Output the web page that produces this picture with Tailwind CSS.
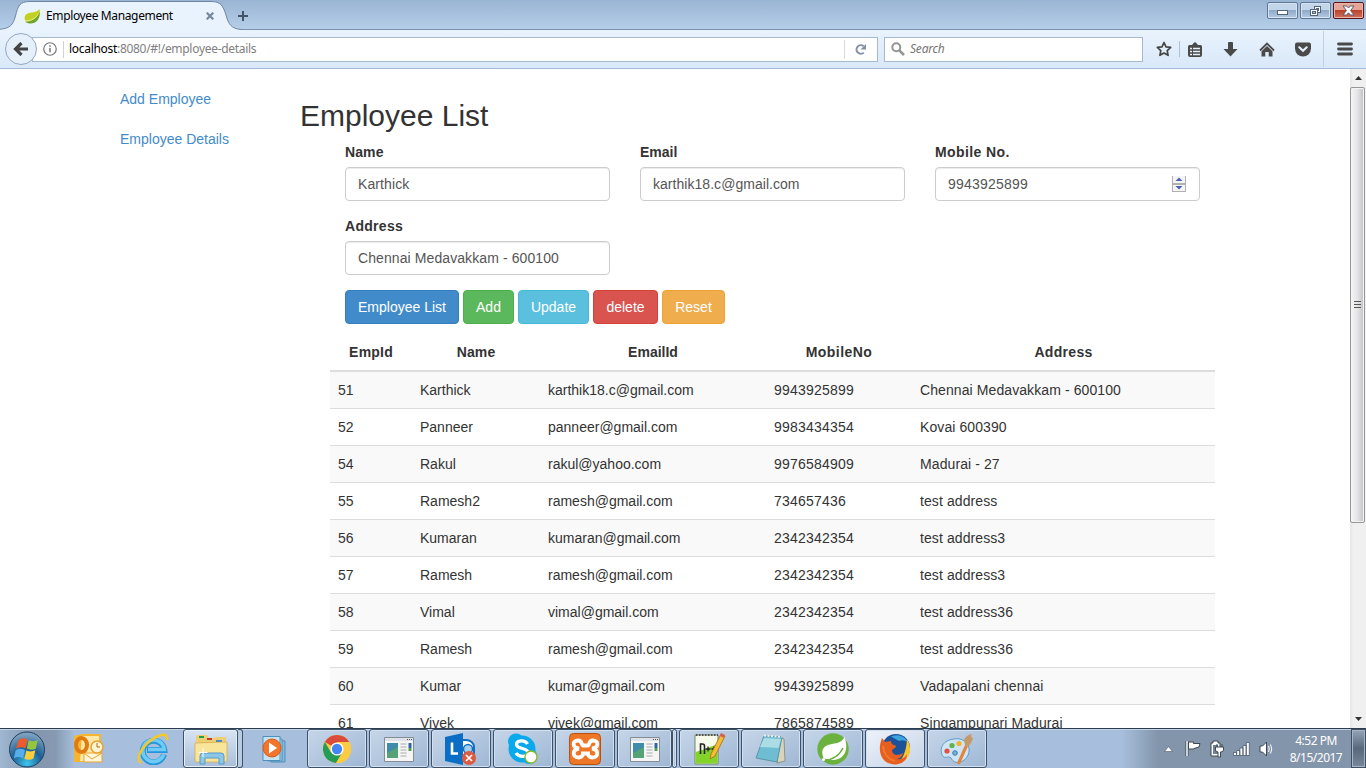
<!DOCTYPE html>
<html lang="en">
<head>
<meta charset="utf-8">
<title>Employee Management</title>
<script src="https://cdn.jsdelivr.net/npm/@tailwindcss/browser@4"></script>
</head>
<body class="w-[1366px] h-[768px] overflow-hidden bg-white font-['Liberation_Sans',Arial,sans-serif] text-sm leading-5 text-[#333]">
<div class="flex flex-col h-[768px] w-[1366px]">

  <!-- Title bar -->
  <header class="relative h-[30px] shrink-0 flex bg-gradient-to-b from-[#9ab4d3] to-[#b5cee9] border-b border-[#7b92ad] font-['Noto_Sans',sans-serif]">
    <svg class="absolute left-0 top-0" width="250" height="30" viewBox="0 0 250 30">
      <path d="M0 30V29C10 28.500 13 25 15.500 16C18 6 19.500 1.500 30 1.500H211C221 1.500 223 6 226 15C228.500 24 231 28.500 241 29.500V30Z" fill="#e9f3fd"/>
      <path d="M0 29.200C10 28.500 13 25 15.500 16C18 6 19.500 1.500 30 1.500H211C221 1.500 223 6 226 15C228.500 24 231 28.500 241 29.500" fill="none" stroke="#6f86a3"/>
    </svg>
    <div class="relative flex items-center w-[232px] pl-6 pt-[3px] text-black text-xs tracking-[-0.37px]">
      <svg width="16" height="16" viewBox="0 0 16 16" class="shrink-0"><path d="M15.500 1c1 6-.5 13-9 13-2 0-4-.6-5.500-1.600C-.5 7 3 5 8 4.500 12 4 14 3 15.500 1z" fill="#c3d021"/><path d="M15.600 4c.7 6-2.600 11.600-9 11.600-2 0-4-.6-5.600-2C9 13.800 13 10 15.600 4z" fill="#6fa52a"/><path d="M1 12.700c6 .6 11-2.500 13.500-7" stroke="#eef3a0" stroke-width=".8" fill="none"/></svg>
      <span class="ml-[6px] whitespace-nowrap w-[160px]">Employee Management</span>
      <svg width="8" height="8" viewBox="0 0 8 8"><path d="M.7.7l6.600 6.600M7.300.7L.7 7.300" stroke="#77889b" stroke-width="2.200"/></svg>
    </div>
    <svg class="relative mt-[10px] ml-[5px]" width="12" height="12" viewBox="0 0 12 12"><path d="M6 1v10M1 6h10" stroke="#43546a" stroke-width="2"/></svg>
    <div class="ml-auto mr-[2px] mt-[2px] flex gap-[2px] h-[17px]">
      <div class="w-[31px] rounded-[2px] border border-[#5f7695] bg-gradient-to-b from-[#c3d5e9] from-45% via-[#91aac6] via-50% to-[#b4cbe4] shadow-[inset_0_0_0_1px_#d5e3f3] flex justify-center items-end pb-[3px]"><div class="w-[11px] h-[5px] border border-[#53657c] bg-white"></div></div>
      <div class="w-[31px] rounded-[2px] border border-[#5f7695] bg-gradient-to-b from-[#c3d5e9] from-45% via-[#91aac6] via-50% to-[#b4cbe4] shadow-[inset_0_0_0_1px_#d5e3f3] flex justify-center items-center"><svg width="13" height="12" viewBox="0 0 13 12" shape-rendering="crispEdges"><rect x="5.500" y="1.500" width="6" height="6" fill="#fff" stroke="#53657c"/><rect x="7.500" y="3.500" width="2" height="2" fill="#a9bdd5" stroke="#53657c"/><rect x="1.500" y="4.500" width="7" height="6" fill="#fff" stroke="#53657c"/><rect x="3.500" y="6.500" width="3" height="2" fill="#a9bdd5" stroke="#53657c"/></svg></div>
      <div class="w-[31px] rounded-[2px] border border-[#5c1219] bg-gradient-to-b from-[#e4a597] from-45% via-[#bd4229] via-50% to-[#cf705c] shadow-[inset_0_0_0_1px_#e9b5a8] flex justify-center items-center"><svg width="13" height="11" viewBox="0 0 13 11"><path d="M1 1h3.600l1.900 2 1.900-2H12L8.600 5.500 12 10H8.400L6.500 7.800 4.600 10H1l3.400-4.500z" fill="#fff" stroke="#5b5d70"/></svg></div>
    </div>
  </header>

  <!-- Navigation toolbar -->
  <nav class="h-[39px] shrink-0 flex items-center bg-gradient-to-b from-[#e9f3fd] to-[#d9e8f8] border-b border-[#a2bbd7] text-xs font-['Noto_Sans',sans-serif]">
    <div class="relative z-10 ml-[5px] size-8 rounded-full border border-[#94a8c0] bg-[#e6f0fb] flex items-center justify-center shrink-0">
      <svg width="16" height="14" viewBox="0 0 16 14"><path d="M8.500 1L2.500 7l6 6M2.500 7H15" fill="none" stroke="#444" stroke-width="3.200"/></svg>
    </div>
    <div class="-ml-[5px] w-[846px] h-[25px] bg-white border border-[#a5b9cf] flex items-center pl-[10px] shrink-0">
      <svg width="14" height="14" viewBox="0 0 15 15"><circle cx="7.500" cy="7.500" r="6.700" fill="none" stroke="#777" stroke-width="1.300"/><path d="M7.500 6.300v4.700M7.500 3.500v1.600" stroke="#777" stroke-width="1.600"/></svg>
      <div class="ml-[6px] w-px h-[17px] bg-[#d3d3d3]"></div>
      <div class="ml-[5px] text-[#808080] whitespace-nowrap flex-1 tracking-[-0.3px]"><span class="text-black">localhost</span>:8080/#!/employee-details</div>
      <div class="w-px h-[19px] bg-[#d5dbe3]"></div>
      <svg class="ml-[9px] mr-[10px]" width="13" height="13" viewBox="0 0 13 13"><path d="M9.800 9.600A4.300 4.300 0 1 1 9.600 3.200" fill="none" stroke="#8292a6" stroke-width="2"/><path d="M12 1v5.500H6.500z" fill="#8292a6"/></svg>
    </div>
    <div class="ml-[6px] w-[259px] h-[25px] bg-white border border-[#a5b9cf] flex items-center pl-[6px] shrink-0">
      <svg width="14" height="14" viewBox="0 0 14 14"><circle cx="5.300" cy="5.300" r="4" fill="none" stroke="#949494" stroke-width="2"/><path d="M8.300 8.300l4.700 4.700" stroke="#949494" stroke-width="2.600"/></svg>
      <span class="ml-[5px] italic text-[#757575] tracking-[-0.2px]">Search</span>
    </div>
    <svg class="ml-[13px] shrink-0" width="16" height="16" viewBox="0 0 16 16"><path d="M8 1.500l2 4.300 4.700.6-3.500 3.200.9 4.700L8 12l-4.100 2.300.9-4.700L1.300 6.400 6 5.800z" fill="none" stroke="#444" stroke-width="1.700" stroke-linejoin="round"/></svg>
    <div class="ml-[7px] w-px h-4 bg-[#b3bfcc]"></div>
    <svg class="ml-[8px] shrink-0" width="14" height="15" viewBox="0 0 14 15"><path d="M1.500 3h2.500L5.500 1.200Q7-.8 8.500 1.200L10 3h2.500Q14 3 14 4.500v8.500q0 2-2 2H2q-2 0-2-2V4.500Q0 3 1.500 3z" fill="#4a4a4a"/><path d="M2 6.500h2M5 6.500h7M2 9.500h2M5 9.500h7M2 12.500h2M5 12.500h7" stroke="#e6f0fa" stroke-width="1.700"/></svg>
    <svg class="ml-[21px] shrink-0" width="15" height="15" viewBox="0 0 15 15"><path d="M5 1q0-1 1-1h3q1 0 1 1v6h4.500L7.500 14.500.500 7H5z" fill="#4a4a4a"/></svg>
    <svg class="ml-[21px] shrink-0" width="16" height="15" viewBox="0 0 16 15"><path d="M1 8.500L8 1.500l7 7" fill="none" stroke="#4a4a4a" stroke-width="1.800"/><path d="M8 4l5.500 5.300V14.500H9.700V10H6.300v4.500H2.500V9.300z" fill="#4a4a4a"/></svg>
    <svg class="ml-[20px] shrink-0" width="16" height="15" viewBox="0 0 16 15"><path d="M2 .5h12q2 0 2 2V6.500a8 8 0 0 1-16 0V2.500q0-2 2-2z" fill="#4a4a4a"/><path d="M4.300 5.300L8 8.800l3.700-3.500" fill="none" stroke="#e6f0fa" stroke-width="2.200" stroke-linecap="round"/></svg>
    <div class="ml-[12px] w-px h-9 bg-[#bdd0e4]"></div>
    <svg class="ml-[13px] shrink-0" width="16" height="14" viewBox="0 0 16 14"><path d="M1.500 2h13M1.500 7h13M1.500 12h13" stroke="#4a4a4a" stroke-width="2.800" stroke-linecap="round"/></svg>
  </nav>

  <!-- Page viewport -->
  <div class="flex-1 min-h-0 flex overflow-hidden">
    <main class="flex w-[1350px] overflow-hidden">
      <aside class="w-[300px] pl-[120px] pt-5 flex flex-col gap-5 text-[#428bca] shrink-0">
        <a>Add Employee</a>
        <a>Employee Details</a>
      </aside>
      <section class="w-[915px] pt-[30px] shrink-0">
        <h1 class="text-[30px] leading-[33px]">Employee List</h1>
        <form class="pl-[45px] pt-[10px] w-[900px]">
          <div class="grid grid-cols-[265px_265px_265px] gap-x-[30px] gap-y-[15px]">
            <div class="flex flex-col gap-[5px]">
              <label class="font-bold tracking-[0.1px]">Name</label>
              <div class="h-[34px] rounded border border-[#ccc] px-3 flex items-center text-[#555] tracking-[0.1px] shadow-[inset_0_1px_1px_rgba(0,0,0,0.075)]">Karthick</div>
            </div>
            <div class="flex flex-col gap-[5px]">
              <label class="font-bold">Email</label>
              <div class="h-[34px] rounded border border-[#ccc] px-3 flex items-center text-[#555] tracking-[0.04px] shadow-[inset_0_1px_1px_rgba(0,0,0,0.075)]">karthik18.c@gmail.com</div>
            </div>
            <div class="flex flex-col gap-[5px]">
              <label class="font-bold tracking-[0.4px]">Mobile No.</label>
              <div class="h-[34px] rounded border border-[#ccc] px-3 flex items-center justify-between text-[#555] tracking-[0.21px] shadow-[inset_0_1px_1px_rgba(0,0,0,0.075)]">9943925899
                <svg class="mr-px" width="14" height="16" viewBox="0 0 14 16"><path d="M0 0h14v16H0z" fill="#b1b1b1"/><path d="M1 0h12v7H1zM1 9h12v6H1z" fill="#f4f4f4"/><path d="M7 1.500l3.500 3.500h-7zM3.500 10h7L7 13.500z" fill="#4b62b5"/></svg>
              </div>
            </div>
            <div class="flex flex-col gap-[5px]">
              <label class="font-bold tracking-[0.3px]">Address</label>
              <div class="h-[34px] rounded border border-[#ccc] px-3 flex items-center text-[#555] tracking-[0.09px] shadow-[inset_0_1px_1px_rgba(0,0,0,0.075)]">Chennai Medavakkam - 600100</div>
            </div>
          </div>
          <div class="mt-[15px] flex gap-1 text-white">
            <div class="w-[114px] h-[34px] rounded border border-[#357ebd] bg-[#428bca] flex items-center justify-center">Employee List</div>
            <div class="w-[51px] h-[34px] rounded border border-[#4cae4c] bg-[#5cb85c] flex items-center justify-center">Add</div>
            <div class="w-[71px] h-[34px] rounded border border-[#46b8da] bg-[#5bc0de] flex items-center justify-center">Update</div>
            <div class="w-[65px] h-[34px] rounded border border-[#d43f3a] bg-[#d9534f] flex items-center justify-center">delete</div>
            <div class="w-[63px] h-[34px] rounded border border-[#eea236] bg-[#f0ad4e] flex items-center justify-center">Reset</div>
          </div>
        </form>
        <div class="ml-[30px] mt-[10px] w-[885px]">
          <div class="grid grid-cols-[82px_128px_226px_146px_303px] font-bold text-center py-2 border-b-2 border-[#ddd]"><span class="tracking-[0.2px]">EmpId</span><span class="tracking-[0.1px]">Name</span><span>EmailId</span><span class="tracking-[0.45px]">MobileNo</span><span class="tracking-[0.3px]">Address</span></div>
          <div class="*:grid *:grid-cols-[82px_128px_226px_146px_303px] *:px-2 *:py-2 *:border-b *:border-[#ddd] *:odd:bg-[#f9f9f9] [&_span:nth-child(4)]:tracking-[0.21px] [&_span:nth-child(5)]:tracking-[0.09px]">
            <div><span>51</span><span>Karthick</span><span>karthik18.c@gmail.com</span><span>9943925899</span><span>Chennai Medavakkam - 600100</span></div>
            <div><span>52</span><span>Panneer</span><span>panneer@gmail.com</span><span>9983434354</span><span>Kovai 600390</span></div>
            <div><span>54</span><span>Rakul</span><span>rakul@yahoo.com</span><span>9976584909</span><span>Madurai - 27</span></div>
            <div><span>55</span><span>Ramesh2</span><span>ramesh@gmail.com</span><span>734657436</span><span>test address</span></div>
            <div><span>56</span><span>Kumaran</span><span>kumaran@gmail.com</span><span>2342342354</span><span>test address3</span></div>
            <div><span>57</span><span>Ramesh</span><span>ramesh@gmail.com</span><span>2342342354</span><span>test address3</span></div>
            <div><span>58</span><span>Vimal</span><span>vimal@gmail.com</span><span>2342342354</span><span>test address36</span></div>
            <div><span>59</span><span>Ramesh</span><span>ramesh@gmail.com</span><span>2342342354</span><span>test address36</span></div>
            <div><span>60</span><span>Kumar</span><span>kumar@gmail.com</span><span>9943925899</span><span>Vadapalani chennai</span></div>
            <div><span>61</span><span>Vivek</span><span>vivek@gmail.com</span><span>7865874589</span><span>Singampunari Madurai</span></div>
          </div>
        </div>
      </section>
    </main>
    <div class="w-4 bg-gradient-to-r from-[#e6e6e6] to-[#f0f0f0] to-20% flex flex-col items-start shrink-0">
      <svg class="shrink-0" width="16" height="18" viewBox="0 0 16 18"><path d="M8.500 7l3.500 4H5z" fill="#333"/></svg>
      <div class="w-[15px] h-[436px] rounded-[2px] border border-[#979797] bg-gradient-to-r from-[#f5f5f5] via-[#e4e4e6] via-50% to-[#bfc1c6] shadow-[inset_0_0_0_1px_#f3f3f3] flex items-center justify-center pb-[2px]"><svg width="7" height="9" viewBox="0 0 7 9"><path d="M0 1.500h7M0 4.500h7M0 7.500h7" stroke="#555"/></svg></div>
      <svg class="mt-auto" width="16" height="18" viewBox="0 0 16 18"><path d="M5 7h7l-3.500 4z" fill="#333"/></svg>
    </div>
  </div>

  <!-- Taskbar -->
  <footer class="h-10 shrink-0 flex border-t border-[#2d3d50] shadow-[inset_0_1px_0_#c6d6e8] bg-[linear-gradient(90deg,#a0b7d2_0,#8396ad_35px,#8699b1_55px,#a7bfdc_75px,#a7bfdc_1122px,#8395ab_1158px,#8395ab_100%)]">
    <div class="w-[53px] pl-2 flex items-center">
      <svg width="38" height="38" viewBox="0 0 38 38"><defs><radialGradient id="orb" cx=".5" cy=".9" r=".85"><stop offset="0" stop-color="#3ec6ee"/><stop offset=".5" stop-color="#1d5f94"/><stop offset="1" stop-color="#7fa3c0"/></radialGradient></defs><circle cx="19" cy="19.500" r="17.500" fill="url(#orb)" stroke="#203f5e"/><path d="M10.500 10q4.500-3 9-.5l-2 9q-5-2.500-9.500.3z" fill="#eb5b2b"/><path d="M20.800 10.300q4.500 2 9-.3l-2 8.700q-4.500 2-9-.2z" fill="#96c63e"/><path d="M7.700 20.200q4.500-2.600 9.300-.2l-2 8.200q-4.500-2.500-9.300.3z" fill="#57aeea"/><path d="M18.400 20.500q4.500 2 9-.2l-2 8.200q-4.500 2.500-9 .2z" fill="#fbcf3b"/></svg>
    </div>
    <div class="w-[70px] flex items-center justify-center">
      <svg width="32" height="32" viewBox="0 0 32 32"><path d="M2 3Q12 0 20 1h9v28H2z" fill="#f5b52f"/><path d="M10 3h17v25H8z" fill="#fce9a9"/><path d="M12 20h18v9H12z" fill="#fff6da" stroke="#e9a32a"/><path d="M12 20l8 6 10-6" fill="none" stroke="#e9a32a"/><ellipse cx="9.500" cy="12" rx="5.500" ry="7" fill="none" stroke="#e07a12" stroke-width="4"/><circle cx="25" cy="14" r="6" fill="#fff3d0" stroke="#e8a12c" stroke-width="1.500"/><path d="M25 10v4h3" fill="none" stroke="#ad6a12"/></svg>
    </div>
    <div class="w-[60px] flex items-center justify-center">
      <svg width="32" height="32" viewBox="0 0 32 32"><path d="M27 21.500A10.800 10.800 0 1 1 27.300 17H10" fill="none" stroke="#2596dc" stroke-width="6"/><path d="M26.700 21.500A10.800 10.800 0 1 1 27.300 16.500H11" fill="none" stroke="#6fcbf5" stroke-width="3.600"/><path d="M4 30C-3 25 8 7 24 2q7-1.500 6 5" fill="none" stroke="#f3c82b" stroke-width="2.600"/></svg>
    </div>
    <div class="w-[55px] rounded-[3px] border border-[#3d5168] shadow-[inset_0_0_0_1px_#e6eef7] bg-gradient-to-b from-[#d8e4f2] to-[#a9bfda] flex items-center justify-center">
      <svg width="34" height="32" viewBox="0 0 34 32"><path d="M2 4l1-2h10l2 3h5l1-1h11v24H2z" fill="#edce73"/><path d="M5 3h5v2H5z" fill="#20a04a"/><path d="M13 5h5v2h-5z" fill="#c83b2b"/><path d="M22 7h6v2h-6z" fill="#4089d7"/><path d="M1 10l32-1v18q0 2-2 2H3q-2 0-2-2z" fill="#f8e59a" stroke="#d3a842" stroke-width=".7"/><path d="M6 31V23q0-3 3-3h18q3 0 3 3v8h-5v-6H11v6z" fill="#8cc7ea" stroke="#579bc7"/><path d="M9 15v9M4.500 19.500h9" stroke="#fff"/></svg>
    </div>
    <div class="w-[5px] rounded-r-[3px] border-y border-r border-[#3d5168] bg-[#b7cbe2]"></div>
    <div class="w-[64px] flex items-center justify-center">
      <svg width="30" height="28" viewBox="0 0 30 28"><path d="M11 4l14 2v21H11z" fill="#7fb9dc" stroke="#5592ba"/><path d="M8 3l14 1v22H8z" fill="#a5d4ec" stroke="#5592ba"/><path d="M3 1.500h17v24H3z" fill="#c5e4f3" stroke="#4c91bd"/><circle cx="12" cy="13" r="9" fill="#f3742b" stroke="#dc5a15"/><path d="M9 7.500l8 5.500-8 5.500z" fill="#fff"/></svg>
    </div>
    <div class="flex *:border *:border-[#3d5168] *:rounded-[3px] *:shadow-[inset_0_0_0_1px_#d3e0ef] *:bg-gradient-to-br *:from-[#c6d6e9] *:to-[#9fb7d4] *:flex *:items-center *:justify-center">
      <div class="w-[60px] mr-[2px]"><svg width="30" height="30" viewBox="0 0 32 32"><circle cx="16" cy="16" r="15" fill="#fccb41"/><path d="M16 16L3 8.500A15 15 0 0 1 29 8.500H16z" fill="#da4b3b"/><path d="M3 8.500A15 15 0 0 0 15 31l7.500-11.500L16 16l-6.500 3.500z" fill="#259b55"/><path d="M16 9h13.300A15 15 0 0 1 15 31l7-12z" fill="#fccb41"/><circle cx="16" cy="16" r="7" fill="#fff"/><circle cx="16" cy="16" r="5.500" fill="#4285f4"/></svg></div>
      <div class="w-[60px] mr-[2px]"><svg width="32" height="28" viewBox="0 0 32 28"><path d="M1.500 2.500h29v24h-29z" fill="#f5f5f5" stroke="#858d94"/><path d="M2 3h28v3H2z" fill="#dfe3e7"/><path d="M24 4.500h5" stroke="#555" stroke-dasharray="1 1"/><path d="M4 8h11v15H4z" fill="#408aaa"/><path d="M4 23V18l11-6v11z" fill="#55a276"/><path d="M17.500 9h6M17.500 12h6M17.500 15h6M17.500 18h6M17.500 21h6" stroke="#aaa"/><path d="M25.500 8h3v5h-3z" fill="#3264a5"/><path d="M25.500 13h3v3h-3z" fill="#50a052"/></svg></div>
      <div class="w-[60px] mr-[2px]"><svg width="34" height="32" viewBox="0 0 34 32"><path d="M16 7h6a8 7 0 0 1 8 7v9H16z" fill="#fff" stroke="#0f6fc5" stroke-width="2"/><circle cx="24" cy="16" r="4.500" fill="#a9cdec" stroke="#0f6fc5" stroke-width="1.500"/><path d="M1 4l18-4v32L1 28z" fill="#0b6ec6"/><path d="M8 9.500v11h6" fill="none" stroke="#fff" stroke-width="2.600"/><circle cx="25" cy="25" r="7" fill="#da5b42"/><path d="M22 22l6 6M28 22l-6 6" stroke="#fff" stroke-width="1.700"/></svg></div>
      <div class="w-[60px] mr-[2px]"><svg width="32" height="32" viewBox="0 0 32 32"><circle cx="15" cy="16" r="13.500" fill="#09a9ec"/><circle cx="9" cy="8.500" r="8" fill="#09a9ec"/><circle cx="22" cy="23" r="8" fill="#09a9ec"/><path d="M20.500 11C18 6.500 9.500 7 9.500 11.500c0 5 11.500 3 11.500 8 0 5-9.500 5-12 .5" fill="none" stroke="#fff" stroke-width="3.300"/><circle cx="24" cy="24" r="6" fill="#fff" stroke="#8cbb20" stroke-width="1.300"/></svg></div>
      <div class="w-[60px] mr-[2px]"><svg width="32" height="32" viewBox="0 0 32 32"><rect x=".5" y=".5" width="31" height="31" rx="4" fill="#ee7627" stroke="#b9500d"/><path d="M9 7.500c-6 0-6 7 1 8-7 1-7 9 0 9 4 0 4-4 4-4h5s0 4 4 4c7 0 7-8 0-9 7-1 7-8 1-8-5 0-3 5-5 5h-5c-2 0 0-5-5-5z" fill="none" stroke="#fff" stroke-width="3.800"/></svg></div>
      <div class="w-[55px]"><svg width="32" height="28" viewBox="0 0 32 28"><path d="M1.500 2.500h29v24h-29z" fill="#f5f5f5" stroke="#858d94"/><path d="M2 3h28v3H2z" fill="#dfe3e7"/><path d="M24 4.500h5" stroke="#555" stroke-dasharray="1 1"/><path d="M4 8h11v15H4z" fill="#408aaa"/><path d="M4 23V18l11-6v11z" fill="#55a276"/><path d="M17.500 9h6M17.500 12h6M17.500 15h6M17.500 18h6M17.500 21h6" stroke="#aaa"/><path d="M25.500 8h3v5h-3z" fill="#3264a5"/><path d="M25.500 13h3v3h-3z" fill="#50a052"/></svg></div>
      <div class="w-[5px] mr-[2px]"></div>
      <div class="w-[60px] mr-[2px]"><svg width="34" height="34" viewBox="0 0 34 34"><path d="M3 3h23v29H3z" fill="#f7fbea" stroke="#75856b"/><path d="M3.500 20q11-3 22-8v19.500h-22z" fill="#84d329"/><path d="M4 3h22" stroke="#555" stroke-width="2" stroke-dasharray="1.500 1.500"/><path d="M8.500 22V12h2q2 0 2 2v8" fill="none" stroke="#222" stroke-width="1.600"/><path d="M13.500 17h5M16 14.500v5M19.500 17h5M22 14.500v5" stroke="#222" stroke-width="1.300"/><path d="M18 27l1-5L29 2l4 2-10 20z" fill="#f7bb37" stroke="#a66c14" stroke-width=".8"/><path d="M28 4l4 2 1-3-4-2z" fill="#d8604e"/></svg></div>
      <div class="w-[60px] mr-[2px]"><svg width="34" height="32" viewBox="0 0 34 32"><path d="M26 4l4 2 1 22-8 2z" fill="#d9d3bc" stroke="#7e7a68" stroke-width=".7"/><path d="M10 3l18 1-5 25-21-4z" fill="#6fbdd2" stroke="#5a95a6"/><path d="M10 5l17 1-2.500 9L6 14z" fill="#abdde7"/><path d="M10 2.500l18 1.500" stroke="#eee" stroke-width="2" stroke-dasharray="2 1.500"/></svg></div>
      <div class="w-[60px] mr-[2px]"><svg width="32" height="32" viewBox="0 0 32 32"><circle cx="16" cy="16" r="15.700" fill="#6bb13d"/><path d="M27.500 4c5 14-1 23-12 23-4 0-7-1-9-2C3 17 7 12 15 11c6-1 10-2 12.500-7z" fill="#fff"/><path d="M7 27c9 0 15-4 19-12" fill="none" stroke="#6bb13d" stroke-width="1.500"/><circle cx="6.500" cy="26.500" r="1.600" fill="#fff"/></svg></div>
      <div class="w-[60px] mr-[2px] from-[#eef3fa]! to-[#c4d3e6]!"><svg width="32" height="32" viewBox="0 0 32 32"><circle cx="17" cy="15" r="14" fill="#1d5299"/><path d="M12 3.500q11-4 17 5.500-5-3-9-1z" fill="#3ea4de"/><path d="M28 6q5 8 2 16-4 8-13 9 10-6 11-25z" fill="#f8c62c"/><path d="M3 5l3 4 6-1q0 3 3 4 2 0 2 2l-4 3q0 4 4 5 4 0 7-2-1 5-6 6 7 1 10-5 0 9-11 10.500C4 32-3 20 3 5z" fill="#e65f20"/><path d="M4 13q1 12 12 15" fill="none" stroke="#f07a28" stroke-width="2"/></svg></div>
      <div class="w-[60px]"><svg width="34" height="32" viewBox="0 0 34 32"><path d="M14 6C4 7-1 14 2 22c3 5 6 0 9 3 2 4 5 5 9 4 8-2 11-11 8-17-3-5-8-7-14-6z" fill="#cfe4f5" stroke="#5c9dcb"/><circle cx="7" cy="18" r="2.600" fill="#e0523f"/><circle cx="12" cy="12.500" r="2.600" fill="#62b14a"/><circle cx="19" cy="10.500" r="2.600" fill="#f2b233"/><circle cx="15" cy="20" r="2.300" fill="#7dafd9" stroke="#3b7bb0"/><path d="M17 30l8-18 3 1-8 18q-2 1-3-1z" fill="#e4843a"/><path d="M25 12l-1-5q2-5 8-6-2 3 1 4-1 5-5 8z" fill="#c49a6c"/></svg></div>
    </div>
    <div class="ml-auto flex items-center text-white">
      <svg width="9" height="6" viewBox="0 0 9 6"><path d="M4.500.5l4 5h-8z" fill="#fff" stroke="#4b5b6e" stroke-width=".6"/></svg>
      <svg class="ml-[12px]" width="17" height="17" viewBox="0 0 17 17"><path d="M2 1v15" stroke="#3c4855" stroke-width="3"/><path d="M3.500 2h5v1.500H15l-1 3.500-5 1.500V9H3.500z" fill="#fff" stroke="#3c4855"/><path d="M2 1v15" stroke="#fff" stroke-width="1.500"/></svg>
      <svg class="ml-[7px]" width="16" height="18" viewBox="0 0 16 18"><path d="M2 3h2V1h5v2h2v13H2z" fill="#fff" stroke="#3c4855"/><path d="M4 5h5v9H4z" fill="#718197"/><path d="M8 4v3M13 4v3M6.500 7h8v3q0 2-3 2v5H9v-5q-2.500 0-2.500-2z" fill="#fff" stroke="#3c4855"/></svg>
      <svg class="ml-[8px]" width="17" height="14" viewBox="0 0 17 14"><path d="M.5 10.500h3v3h-3zM3.700 8.500h3v5h-3zM6.900 6h3v7.500h-3zM10.100 3.500h3v10h-3zM13.300.5h3v13h-3z" fill="#fff" stroke="#4b5b6e" stroke-width=".8"/></svg>
      <svg class="ml-[9px]" width="14" height="16" viewBox="0 0 14 16"><path d="M1 5h2.500L7.500 1v14l-4-4H1z" fill="#fff" stroke="#3c4855"/><path d="M9.500 5q1.500 3 0 6M11.500 3.500q2.500 4.500 0 9" fill="none" stroke="#fff"/></svg>
      <div class="w-[72px] ml-[7px] -mr-px text-center text-xs leading-[17px] tracking-[-0.5px] font-['Noto_Sans',sans-serif]">4:52 PM<br>8/15/2017</div>
      <div class="w-[15px] h-full border border-[#3f4e61] shadow-[inset_0_0_0_1px_#a7b5c6] bg-gradient-to-b from-[#94a4b9] via-[#58687d] to-[#77879c]"></div>
    </div>
  </footer>
</div>
</body>
</html>
